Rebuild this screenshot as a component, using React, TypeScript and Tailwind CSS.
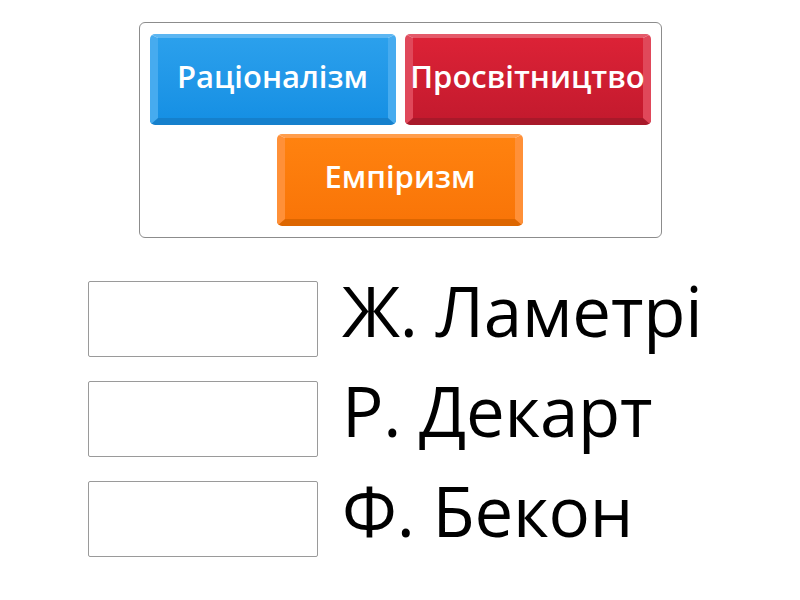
import React from "react";

const tiles = {
  blue: "bg-gradient-to-b from-[#2ba0ec] to-[#1690e4] border-t-[#5cb6f2] border-x-[#46abef] border-b-[#1580cc]",
  red: "bg-gradient-to-b from-[#dc2236] to-[#c41a2e] border-t-[#e45a6a] border-x-[#e0485a] border-b-[#a8192a]",
  orange: "bg-gradient-to-b from-[#ff820f] to-[#f97508] border-t-[#ff9d4c] border-x-[#ff9038] border-b-[#dd6600]",
};

function Tile({ label, color, tall }: { label: string; color: keyof typeof tiles; tall?: boolean }) {
  return (
    <div
      className={`w-[246px] ${tall ? "h-[92px]" : "h-[91px]"} rounded-[5px] border-t-[4px] border-x-[8px] border-b-[7px] pb-[4px] flex items-center justify-center text-white font-semibold text-[31px] leading-none ${tiles[color]}`}
      style={{ fontFamily: '"Open Sans", sans-serif' }}
    >
      <span className="whitespace-nowrap">{label}</span>
    </div>
  );
}

function Row({ text }: { text: string }) {
  return (
    <div className="flex items-center h-[76px]">
      <div className="w-[230px] h-[76px] border border-[#9a9a9a] rounded-[2px] bg-white" />
      <div
        className="ml-[24px] mb-[18px] text-[69px] tracking-[-0.2px] text-black leading-none whitespace-nowrap"
        style={{ fontFamily: '"Open Sans", sans-serif' }}
      >
        {text}
      </div>
    </div>
  );
}

export default function App() {
  return (
    <div className="w-[800px] h-[600px] bg-white relative overflow-hidden">
      <div className="pt-[22px] flex justify-center">
        <div className="w-[523px] h-[216px] border border-[#8c8c8c] rounded-[6px] pt-[11px] px-[9px] flex flex-col items-center gap-[9px]">
          <div className="flex gap-[9px]">
            <Tile label="Раціоналізм" color="blue" />
            <Tile label="Просвітництво" color="red" />
          </div>
          <Tile label="Емпіризм" color="orange" tall />
        </div>
      </div>
      <div className="mt-[43px] pl-[88px] flex flex-col gap-[24px]">
        <Row text="Ж. Ламетрі" />
        <Row text="Р. Декарт" />
        <Row text="Ф. Бекон" />
      </div>
    </div>
  );
}
